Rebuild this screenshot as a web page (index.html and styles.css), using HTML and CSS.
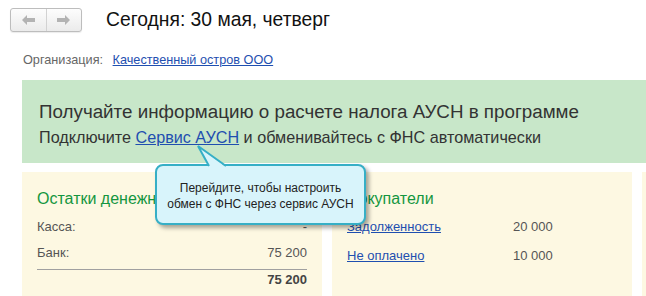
FILE: index.html
```html
<!DOCTYPE html>
<html lang="ru">

<head>
    <meta charset="UTF-8">
    <title>Начальная страница</title>
    <link rel="stylesheet" href="styles.css">
</head>

<body>
    <header class="top">
        <div class="nav">
            <button class="nav-btn" title="Назад">
                <svg width="13" height="10" viewBox="0 0 13 10"><path d="M0 5 L5 0 L5 3 L13 3 L13 7 L5 7 L5 10 Z" fill="#b3b3b3"/></svg>
            </button>
            <button class="nav-btn" title="Вперед">
                <svg width="13" height="10" viewBox="0 0 13 10"><path d="M13 5 L8 0 L8 3 L0 3 L0 7 L8 7 L8 10 Z" fill="#b3b3b3"/></svg>
            </button>
        </div>
        <h1 class="title">Сегодня: 30 мая, четверг</h1>
    </header>

    <div class="org">
        <span class="org-label">Организация:</span>
        <a href="#" class="link">Качественный остров ООО</a>
    </div>

    <section class="banner">
        <h2 class="banner-title">Получайте информацию о расчете налога АУСН в программе</h2>
        <p class="banner-text">Подключите <a href="#" class="link">Сервис АУСН</a> и обменивайтесь с ФНС автоматически</p>

        <div class="tip">
            <svg class="tip-arrow" width="34" height="22" viewBox="0 0 34 22">
                <polygon points="3,1 14,22 31,22" fill="#d8f4fb"/>
                <polyline points="14,21 3,1 31,21" fill="none" stroke="#36afc6" stroke-width="2"/>
            </svg>
            <p>Перейдите, чтобы настроить<br>обмен с ФНС через сервис АУСН</p>
        </div>
    </section>

    <div class="panels">
        <div class="panel">
            <h3 class="panel-title">Остатки денежных средств</h3>
            <div class="row"><span>Касса:</span><span>-</span></div>
            <div class="row"><span>Банк:</span><span>75 200</span></div>
            <div class="row total"><span></span><span>75 200</span></div>
        </div>
        <div class="panel">
            <h3 class="panel-title">Покупатели</h3>
            <div class="row pair"><a href="#" class="link">Задолженность</a><span>20 000</span></div>
            <div class="row pair"><a href="#" class="link">Не оплачено</a><span>10 000</span></div>
        </div>
        <div class="panel"></div>
    </div>
</body>

</html>
```

FILE: styles.css
```css
* {
    margin: 0;
    padding: 0;
    box-sizing: border-box;
}

body {
    width: 646px;
    height: 296px;
    overflow: hidden;
    font-family: "Liberation Sans", Arial, sans-serif;
    color: #333;
    background: #fff;
}

.top {
    display: flex;
    align-items: center;
    padding: 8px 0 0 10px;
    height: 32px;
}

.nav {
    display: flex;
    width: 72px;
    height: 24px;
    border: 1px solid #bdbdbd;
    border-radius: 3px;
    background: linear-gradient(#fdfdfd, #ebebeb);
    box-shadow: 0 1px 1px rgba(0, 0, 0, 0.08);
}

.nav-btn {
    flex: 1;
    border: none;
    background: none;
    display: flex;
    align-items: center;
    justify-content: center;
}

.nav-btn + .nav-btn {
    border-left: 1px solid #d2d2d2;
}

.title {
    margin-left: 24px;
    font-size: 19.3px;
    font-weight: normal;
    color: #111;
}

.org {
    margin: 20px 0 0 23px;
    font-size: 12.7px;
    line-height: 16px;
}

.org-label {
    color: #666;
    margin-right: 6px;
}

.link {
    color: #1f4fb0;
    text-decoration: underline;
}

.banner {
    position: relative;
    margin: 12px 0 0 22px;
    height: 83px;
    padding: 21px 0 0 17px;
    background: #c8e7c9;
}

.banner-title {
    font-size: 18.8px;
    font-weight: normal;
    line-height: 22px;
    color: #333;
}

.banner-text {
    margin-top: 5px;
    font-size: 16.2px;
    line-height: 18px;
    color: #333;
}

.tip {
    position: absolute;
    left: 133px;
    top: 84px;
    width: 211px;
    height: 61px;
    border: 2px solid #36afc6;
    border-radius: 8px;
    background: #d8f4fb;
    box-shadow: 3px 3px 4px rgba(0, 0, 0, 0.35);
    display: flex;
    align-items: center;
    justify-content: center;
    padding-top: 3px;
    z-index: 2;
}

.tip-arrow {
    position: absolute;
    left: 38px;
    top: -21px;
}

.tip p {
    font-size: 12px;
    line-height: 16px;
    text-align: center;
    color: #222;
}

.panels {
    display: grid;
    grid-template-columns: 300px 300px 1fr;
    gap: 10px;
    margin: 9px 0 0 22px;
    height: 130px;
}

.panel {
    background: #fdf8e2;
    padding: 17px 15px 0 15px;
}

.panel-title {
    font-size: 16px;
    font-weight: normal;
    color: #14963f;
    line-height: 20px;
    white-space: nowrap;
    margin-bottom: 9px;
}

.row {
    display: flex;
    justify-content: space-between;
    font-size: 13px;
    line-height: 16px;
    color: #555;
    height: 26px;
    padding-top: 1px;
}

.row.total {
    border-top: 1px solid #a0a0a0;
    height: 24px;
    padding-top: 2px;
    font-weight: bold;
    color: #444;
    margin-top: -1px;
}

.row.pair {
    display: grid;
    grid-template-columns: 166px auto;
    justify-content: start;
    height: 29px;
}

.row.pair .link {
    justify-self: start;
}
```
